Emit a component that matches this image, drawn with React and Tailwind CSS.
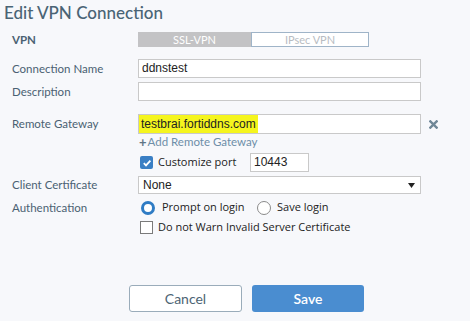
export default function App() {
  const label = "w-[126px] shrink-0 text-[11.5px] text-[#4a6172] font-['Lato',sans-serif]";
  return (
    <div className="w-[470px] h-[321px] bg-[#f7f8fb] overflow-hidden relative">
      <h1 className="pl-[4px] pt-[1px] h-[26px] text-[17px] leading-[24px] text-[#4a6475] font-['Lato',sans-serif] font-medium">
        Edit VPN Connection
      </h1>

      <div className="pl-[12px] mt-[6px] flex items-center h-[15px]">
        <div className={label + " font-bold"}>VPN</div>
        <div className="w-[113px] h-[15px] bg-[#c3c3c5] text-white text-[11px] leading-[15px] text-center font-['Lato',sans-serif]">SSL-VPN</div>
        <div className="w-[118px] h-[15px] bg-white border border-[#9fb4c8] text-[#b8bcc2] text-[11px] leading-[13px] text-center font-['Lato',sans-serif]">IPsec VPN</div>
      </div>

      <div className="pl-[12px] mt-[12px] flex items-center h-[19px]">
        <div className={label}>Connection Name</div>
        <div className="w-[283px] h-[19px] bg-white border border-[#c9c9c9] pl-[3px] text-[12px] leading-[17px] text-[#222] font-['Liberation_Sans',sans-serif]">ddnstest</div>
      </div>

      <div className="pl-[12px] mt-[4px] flex items-center h-[19px]">
        <div className={label}>Description</div>
        <div className="w-[283px] h-[19px] bg-white border border-[#c9c9c9]"></div>
      </div>

      <div className="pl-[12px] mt-[13px] flex items-center h-[20px]">
        <div className={label}>Remote Gateway</div>
        <div className="w-[283px] h-[20px] bg-white border border-[#c9c9c9] text-[12px] leading-[18px] text-[#222] font-['Liberation_Sans',sans-serif]">
          <span className="bg-[#f5f51e] px-[2px] inline-block h-[18px]">testbrai.fortiddns.com</span>
        </div>
        <svg width="9" height="9" viewBox="0 0 10 10" className="ml-[8px]">
          <path d="M1.5 1.5 L8.5 8.5 M8.5 1.5 L1.5 8.5" stroke="#6f8797" strokeWidth="2.6" strokeLinecap="square" />
        </svg>
      </div>

      <div className="pl-[139px] mt-[1px] h-[14px] flex items-center text-[11.5px] text-[#6e8ea8] font-['Lato',sans-serif]">
        <span className="font-bold text-[#5f7585] text-[13px] leading-[14px] mr-[1px]">+</span>Add Remote Gateway
      </div>

      <div className="pl-[140px] mt-[4px] flex items-center h-[19px]">
        <div className="w-[13px] h-[13px] bg-[#3a7fc4] rounded-[2px] flex items-center justify-center">
          <svg width="10" height="10" viewBox="0 0 10 10">
            <path d="M1.8 5.2 L4 7.4 L8.4 2.6" stroke="white" strokeWidth="1.8" fill="none" />
          </svg>
        </div>
        <span className="ml-[5px] w-[92px] text-[11px] text-[#222] font-['Open_Sans',sans-serif]">Customize port</span>
        <div className="w-[59px] h-[19px] bg-white border border-[#c9c9c9] pl-[3px] text-[12px] leading-[17px] text-[#222] font-['Liberation_Sans',sans-serif]">10443</div>
      </div>

      <div className="pl-[12px] mt-[4px] flex items-center h-[18px]">
        <div className={label}>Client Certificate</div>
        <div className="w-[283px] h-[18px] bg-white border border-[#c9c9c9] pl-[4px] pr-[5px] flex items-center justify-between text-[12px] text-[#222] font-['Liberation_Sans',sans-serif]">
          <span>None</span>
          <svg width="7" height="5" viewBox="0 0 7 5"><path d="M0 0 H7 L3.5 5 Z" fill="#222" /></svg>
        </div>
      </div>

      <div className="pl-[12px] mt-[6px] flex items-center h-[15px]">
        <div className={label}>Authentication</div>
        <div className="ml-[3px] w-[14px] h-[14px] rounded-full bg-white border-[3.5px] border-[#2f7cc4]"></div>
        <span className="ml-[7px] w-[95px] text-[11px] text-[#222] font-['Open_Sans',sans-serif]">Prompt on login</span>
        <div className="w-[14px] h-[14px] rounded-full bg-white border border-[#8a8a8a]"></div>
        <span className="ml-[6px] text-[11px] text-[#222] font-['Open_Sans',sans-serif]">Save login</span>
      </div>

      <div className="pl-[140px] mt-[5px] flex items-center h-[15px]">
        <div className="w-[13px] h-[13px] bg-white border border-[#7a7a7a]"></div>
        <span className="ml-[5px] text-[11px] text-[#222] font-['Open_Sans',sans-serif]">Do not Warn Invalid Server Certificate</span>
      </div>

      <div className="pl-[129px] mt-[50px] flex gap-[10px]">
        <button className="w-[113px] h-[27px] bg-white border border-[#9aacba] rounded-[3px] text-[14px] text-[#4d6474] font-['Lato',sans-serif]">Cancel</button>
        <button className="w-[112px] h-[27px] bg-[#4a8dd0] rounded-[3px] text-[14px] text-white font-['Lato',sans-serif] font-semibold">Save</button>
      </div>
    </div>
  );
}
